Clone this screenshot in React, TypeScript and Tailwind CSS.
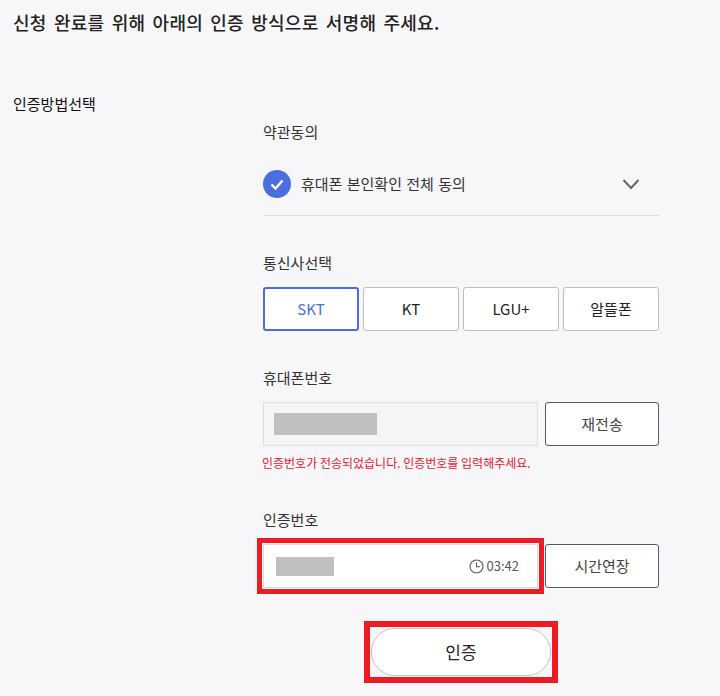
import React from 'react';

const font = { sans: "font-['Noto_Sans_CJK_KR','Noto_Sans',sans-serif]" };

const carriers = ['SKT', 'KT', 'LGU+', '알뜰폰'];

const FieldLabel: React.FC<{ children: React.ReactNode }> = ({ children }) => (
  <div className="text-[15px] leading-[20px] text-[#333]">{children}</div>
);

export default function App() {
  return (
    <div className={`w-[720px] h-[696px] overflow-hidden bg-[#f7f7fa] ${font.sans}`}>
      <h1 className="pl-[13px] pt-[8px] text-[18px] leading-[28px] font-medium tracking-[0.25px] [word-spacing:3px] text-[#222]">
        신청 완료를 위해 아래의 인증 방식으로 서명해 주세요.
      </h1>

      <div className="flex mt-[58px]">
        <div className="w-[263px] pl-[13px] text-[15px] leading-[20px] text-[#111]">인증방법선택</div>

        <div className="w-[396px] pt-[28px]">
          <FieldLabel>약관동의</FieldLabel>

          <div className="mt-[17px] h-[57px] flex items-center justify-between border-b border-[#dcdce0] pb-[7px]">
            <div className="flex items-center gap-[10px]">
              <svg width="28" height="28" viewBox="0 0 28 28">
                <circle cx="14" cy="14" r="14" fill="#4a6ee0" />
                <path d="M8.5 14.5l4 4 7-8" fill="none" stroke="#fff" strokeWidth="2.4" />
              </svg>
              <span className="text-[15px] leading-[20px] [word-spacing:1px] text-[#333]">휴대폰 본인확인 전체 동의</span>
            </div>
            <svg className="mr-[19px]" width="18" height="12" viewBox="0 0 18 12">
              <path d="M1.5 2l7.5 8 7.5-8" fill="none" stroke="#666" strokeWidth="2" />
            </svg>
          </div>

          <div className="mt-[37px]">
            <FieldLabel>통신사선택</FieldLabel>
          </div>
          <div className="mt-[14px] grid grid-cols-4 gap-[4px]">
            {carriers.map((name) => (
              <button
                key={name}
                className={`h-[44px] rounded-[3px] bg-white text-[15px] ${
                  name === 'SKT'
                    ? 'border-2 border-[#4a6ee0] text-[#4a6ee0]'
                    : 'border border-[#bdbdbd] text-[#222]'
                }`}
              >
                {name}
              </button>
            ))}
          </div>

          <div className="mt-[37px]">
            <FieldLabel>휴대폰번호</FieldLabel>
          </div>
          <div className="mt-[14px] flex justify-between">
            <div className="w-[275px] h-[44px] flex items-center pl-[10px] bg-[#f5f5f6] border border-[#dcdcdc]">
              <div className="w-[103px] h-[22px] bg-[#c0c0c0]" />
            </div>
            <button className="w-[114px] h-[44px] rounded-[3px] bg-white border border-[#4d5b6b] text-[15px] text-[#444]">
              재전송
            </button>
          </div>
          <div className="mt-[9px] -ml-px text-[12px] leading-[16px] text-[#f01428]">
            인증번호가 전송되었습니다. 인증번호를 입력해주세요.
          </div>

          <div className="mt-[39px]">
            <FieldLabel>인증번호</FieldLabel>
          </div>
          <div className="mt-[14px] flex justify-between">
            <div className="w-[275px] h-[44px] flex items-center justify-between pl-[12px] pr-[18px] bg-white border border-[#dcdce0] outline-[5px] outline-offset-[1px] outline-[#ed1c24]">
              <div className="w-[58px] h-[19px] bg-[#c0c0c0]" />
              <div className="flex items-center gap-[3px] text-[13px] text-[#555]">
                <svg width="15" height="15" viewBox="0 0 15 15">
                  <circle cx="7.5" cy="7.5" r="6.5" fill="none" stroke="#555" strokeWidth="1.1" />
                  <path d="M7.5 3.5v4.3h3.6" fill="none" stroke="#555" strokeWidth="1.1" />
                </svg>
                03:42
              </div>
            </div>
            <button className="w-[114px] h-[44px] rounded-[3px] bg-white border border-[#4d5b6b] text-[15px] text-[#444]">
              시간연장
            </button>
          </div>

          <div className="mt-[33px] flex justify-center">
            <div className="border-[6px] border-[#ed1c24] p-px">
              <button className="block w-[180px] h-[48px] rounded-full bg-white border border-[#c4c4c4] text-[17px] text-[#222]">
                인증
              </button>
            </div>
          </div>
        </div>
      </div>
    </div>
  );
}
